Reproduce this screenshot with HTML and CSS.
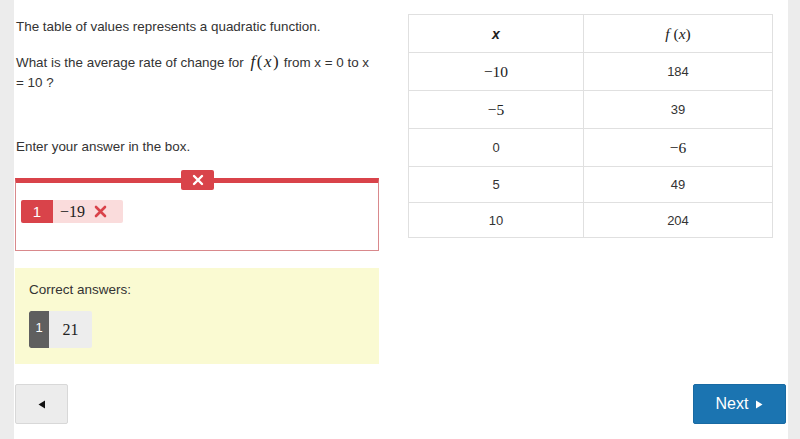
FILE: index.html
```html
<!DOCTYPE html>
<html>
<head>
<meta charset="utf-8">
<link rel="stylesheet" href="styles.css">
</head>
<body>
<div class="page">
  <div class="gutter gutter-left"></div>
  <div class="content">
    <div class="columns">
      <div class="question">
        <p class="line first">The table of values represents a quadratic function.</p>
        <p class="line second">What is the average rate of change for <span class="math fx"><i>f</i>(<i>x</i>)</span> from x = 0 to x = 10 ?</p>
        <p class="line third">Enter your answer in the box.</p>
        <div class="answer-box">
          <div class="answer-tab">
            <svg width="12" height="12" viewBox="0 0 12 12"><path d="M2 2L10 10M10 2L2 10" stroke="#fff" stroke-width="2.4" stroke-linecap="round"/></svg>
          </div>
          <div class="chip wrong">
            <span class="chip-num">1</span>
            <span class="chip-val"><span class="math">−19</span>
              <svg class="chip-x" width="13" height="13" viewBox="0 0 13 13"><path d="M2 2L11 11M11 2L2 11" stroke="#d9434a" stroke-width="2.6" stroke-linecap="round"/></svg>
            </span>
          </div>
        </div>
        <div class="correct">
          <p class="correct-label">Correct answers:</p>
          <div class="chip right">
            <span class="chip-num">1</span>
            <span class="chip-val"><span class="math">21</span></span>
          </div>
        </div>
      </div>
      <table class="values">
        <colgroup><col class="c1"><col class="c2"></colgroup>
        <tr><th><i class="hx">x</i></th><th><span class="math"><i>f</i> (<i>x</i>)</span></th></tr>
        <tr><td><span class="math">−10</span></td><td>184</td></tr>
        <tr><td><span class="math">−5</span></td><td>39</td></tr>
        <tr><td>0</td><td><span class="math">−6</span></td></tr>
        <tr><td>5</td><td>49</td></tr>
        <tr><td>10</td><td>204</td></tr>
      </table>
    </div>
    <div class="nav">
      <button class="btn prev"><svg width="8" height="9" viewBox="0 0 8 9"><path d="M7 0.5V8.5L0.5 4.5Z" fill="#111"/></svg></button>
      <button class="btn next">Next <svg width="8" height="9" viewBox="0 0 8 9"><path d="M1 0.5V8.5L7.5 4.5Z" fill="#fff"/></svg></button>
    </div>
  </div>
  <div class="gutter gutter-right"></div>
</div>
</body>
</html>
```
FILE: styles.css
```css
html, body {
  margin: 0;
  padding: 0;
  background: #fff;
}
body {
  font-family: "Liberation Sans", Arial, sans-serif;
  font-size: 13.4px;
  color: #333;
}
.page {
  display: flex;
  width: 800px;
  height: 439px;
  overflow: hidden;
}
.gutter {
  background: #ececec;
}
.gutter-left { width: 14px; }
.gutter-right { width: 12px; }
.content {
  flex: 1;
  display: flex;
  flex-direction: column;
  padding: 0 2px 0 1px;
}
.columns {
  display: grid;
  grid-template-columns: 364px 364px;
  column-gap: 29px;
  align-items: start;
}
.question {
  padding-top: 17px;
}
.line {
  margin: 0;
  line-height: 20px;
  padding-left: 1px;
}
.second { margin-top: 15px; }
.third { margin-top: 44px; }
.math {
  font-family: "Liberation Serif", "Times New Roman", serif;
  font-size: 16px;
  color: #222;
}
.math i { font-style: italic; }
.fx {
  font-size: 17px;
  letter-spacing: 1.5px;
  margin: 0 0 0 3px;
}
.answer-box {
  position: relative;
  margin-top: 21px;
  height: 73px;
  box-sizing: border-box;
  border: 1px solid #d9898c;
  border-top: 5px solid #d9434a;
  padding: 17px 5px 0;
}
.answer-tab {
  position: absolute;
  left: 165px;
  top: -13px;
  width: 33px;
  height: 20px;
  background: #d9434a;
  border-radius: 2px;
  display: flex;
  align-items: center;
  justify-content: center;
}
.chip {
  display: inline-flex;
  align-items: stretch;
  border-radius: 2px;
  overflow: hidden;
}
.chip.wrong { height: 23px; }
.chip.wrong .chip-num {
  width: 32px;
  background: #d9434a;
  color: #fff;
  font-size: 15px;
  display: flex;
  align-items: center;
  justify-content: center;
}
.chip.wrong .chip-val {
  width: 70px;
  background: #fadcdc;
  display: flex;
  align-items: center;
  padding-left: 7px;
  gap: 9px;
  box-sizing: border-box;
}
.correct {
  margin-top: 17px;
  height: 96px;
  background: #fafad2;
  padding: 13px 14px 0;
  box-sizing: border-box;
}
.correct-label {
  margin: 0;
  line-height: 18px;
  font-size: 13.5px;
}
.chip.right {
  margin-top: 12px;
  height: 37px;
}
.chip.right .chip-num {
  width: 20px;
  background: #5f5f5f;
  color: #fff;
  font-size: 13px;
  display: flex;
  justify-content: center;
  padding-top: 9px;
  box-sizing: border-box;
  border-radius: 2px 0 0 2px;
}
.chip.right .chip-val {
  width: 43px;
  background: #ededed;
  display: flex;
  align-items: center;
  justify-content: center;
}
.values {
  margin-top: 14px;
  width: 364px;
  border-collapse: collapse;
  table-layout: fixed;
}
.c1 { width: 175px; }
.c2 { width: 189px; }
.values th, .values td {
  border: 1px solid #e0e0e0;
  text-align: center;
  font-weight: normal;
  padding: 0;
  font-size: 13px;
}
.values .math { font-size: 15.5px; }
.values tr:nth-child(1) { height: 38px; }
.values tr:nth-child(2) { height: 38px; }
.values tr:nth-child(3) { height: 38px; }
.values tr:nth-child(4) { height: 38px; }
.values tr:nth-child(5) { height: 36px; }
.values tr:nth-child(6) { height: 35px; }
.hx {
  font-weight: bold;
  font-size: 14px;
  color: #222;
}
.nav {
  margin-top: auto;
  margin-bottom: 15px;
  display: flex;
  justify-content: space-between;
}
.btn {
  height: 40px;
  border-radius: 2px;
  font-family: "Liberation Sans", Arial, sans-serif;
  display: flex;
  align-items: center;
  justify-content: center;
  padding: 0;
}
.prev {
  width: 53px;
  background: #ececec;
  border: 1px solid #d8d8d8;
}
.next {
  width: 93px;
  background: #1b74b1;
  border: 1px solid #186aa3;
  color: #fff;
  font-size: 16px;
  gap: 7px;
}
```
